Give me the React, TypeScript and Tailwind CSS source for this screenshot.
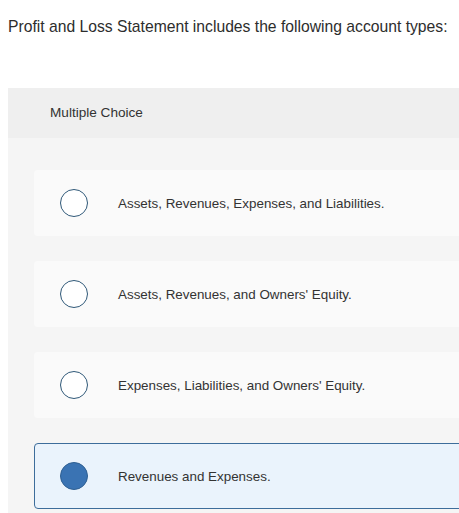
const options = [
  { id: 'a', label: 'Assets, Revenues, Expenses, and Liabilities.' },
  { id: 'b', label: "Assets, Revenues, and Owners' Equity." },
  { id: 'c', label: "Expenses, Liabilities, and Owners' Equity." },
  { id: 'd', label: 'Revenues and Expenses.' },
]

const selected = 'd'

export default function App() {
  return (
    <div className="w-[459px] h-[513px] overflow-hidden bg-white font-['Liberation_Sans',Arial,sans-serif] [font-variant-ligatures:none] text-[#333]">
      <p className="pl-2 pt-[15px] text-[15.7px] leading-6 text-[#2d2d2d]">
        Profit and Loss Statement includes the following account types:
      </p>

      <div className="ml-2 mt-[49px] w-[520px] bg-[#f5f5f5]">
        {/* Header */}
        <div className="h-[50px] flex items-center pl-[42px] bg-[#efefef] text-[13.6px] text-[#333]">
          Multiple Choice
        </div>

        {/* Options */}
        <div className="pl-[26px] pt-8 pb-6 flex flex-col gap-[25px]">
          {options.map((opt) => {
            const isSel = opt.id === selected
            return (
              <div
                key={opt.id}
                className={`h-[66px] flex items-center pl-[25px] rounded-sm border ${
                  isSel ? 'bg-[#eaf3fc] border-[#3d6d9b]' : 'bg-[#fafafa] border-transparent'
                }`}
              >
                <span
                  className={`w-[28px] h-[28px] rounded-full shrink-0 border-[1.5px] ${
                    isSel ? 'bg-[#3a73b3] border-[#2f5f92]' : 'bg-white border-[#2f5878]'
                  }`}
                />
                <span className="ml-[30px] mt-[2px] text-[13.4px] text-[#333]">{opt.label}</span>
              </div>
            )
          })}
        </div>
      </div>
    </div>
  )
}
